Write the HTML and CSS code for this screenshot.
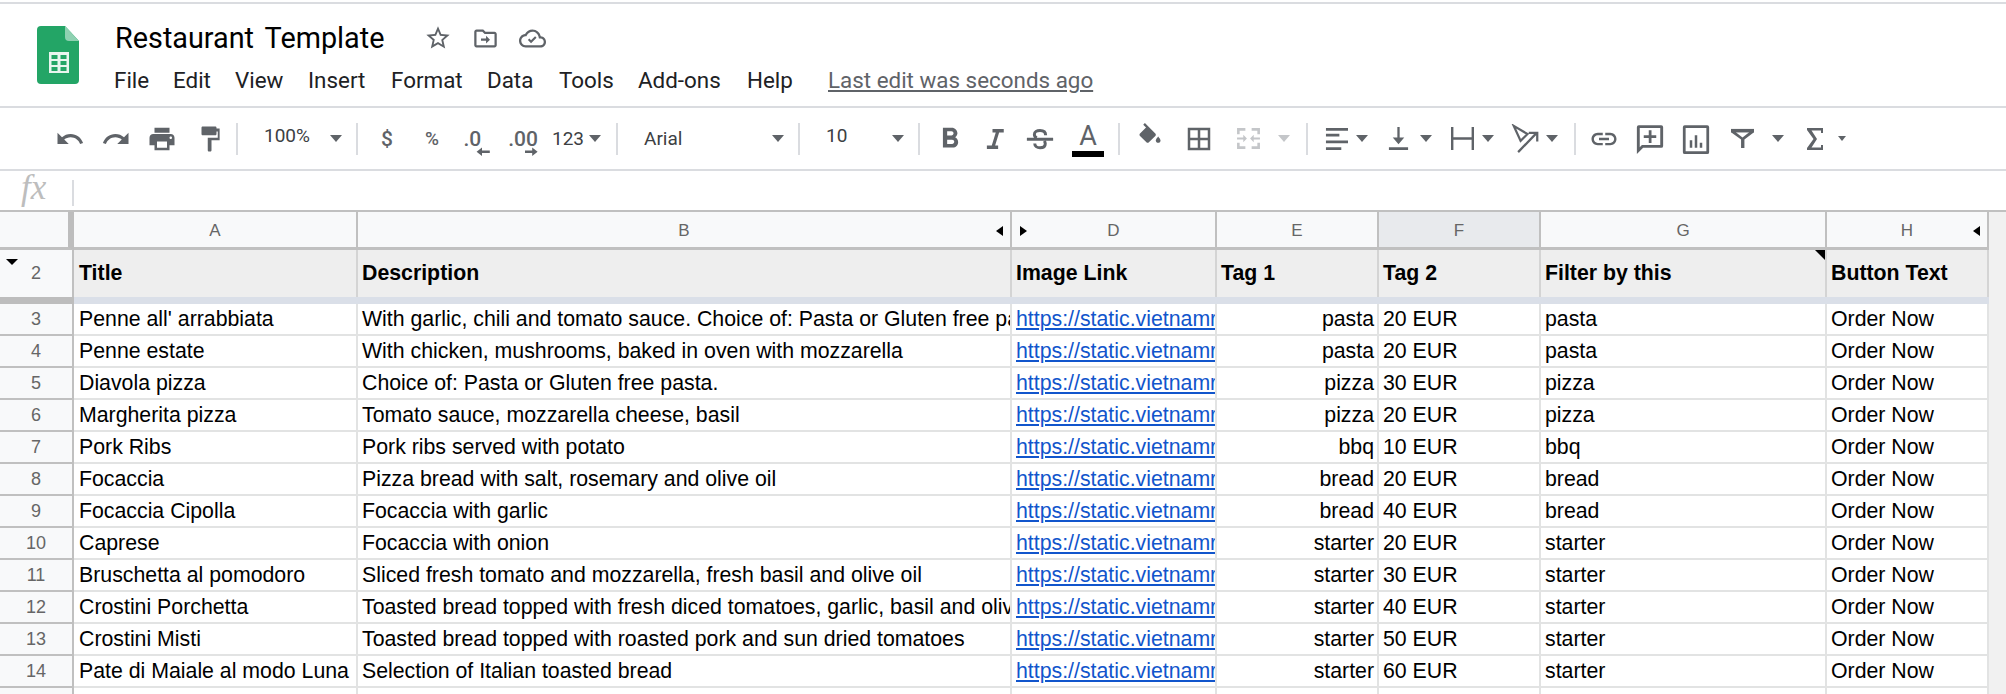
FILE: index.html
```html
<!DOCTYPE html>
<html lang="en">
<head>
<meta charset="utf-8">
<title>Restaurant Template</title>
<link rel="stylesheet" href="styles.css">
</head>
<body>
<header class="appbar">
  <svg class="logo" viewBox="0 0 42 58"><path fill="#23a566" d="M4 0H28L42 15V54a4 4 0 0 1-4 4H4a4 4 0 0 1-4-4V4a4 4 0 0 1 4-4z"/><path fill="#8ed1b1" d="M28 0L42 15H32a4 4 0 0 1-4-4z"/><path fill="#e8f5ee" d="M12 26H32V47H12zM14.500 29V33H20.500V29zM23.500 29V33H29.500V29zM14.500 35V39H20.500V35zM23.500 35V39H29.500V35zM14.500 41V45H20.500V41zM23.500 41V45H29.500V41z" fill-rule="evenodd"/></svg>
  <div class="titleblock">
    <div class="titlerow">
      <h1 class="doctitle">Restaurant Template</h1>
      <svg class="ticon star" viewBox="0 0 24 24"><path d="M22 9.240l-7.190-.62L12 2 9.190 8.630 2 9.240l5.460 4.730L5.820 21 12 17.270 18.180 21l-1.630-7.030L22 9.240zM12 15.400l-3.760 2.270 1-4.280-3.320-2.880 4.380-.38L12 6.100l1.710 4.040 4.380.38-3.320 2.880 1 4.280L12 15.400z"/></svg>
      <svg class="ticon folder" viewBox="0 0 24 24"><path d="M20 6h-8l-2-2H4c-1.100 0-2 .9-2 2v12c0 1.100.9 2 2 2h16c1.100 0 2-.9 2-2V8c0-1.100-.9-2-2-2zm0 12H4V6h5.200l2 2H20v10z"/><path d="M12.500 9.500v2.500H8v2h4.500v2.500l3.500-3.500z"/></svg>
      <svg class="ticon cloud" viewBox="0 0 24 24"><path d="M19.350 10.040C18.670 6.590 15.640 4 12 4 9.110 4 6.600 5.640 5.350 8.040 2.340 8.360 0 10.910 0 14c0 3.310 2.690 6 6 6h13c2.760 0 5-2.240 5-5 0-2.640-2.050-4.780-4.650-4.960zM19 18H6c-2.210 0-4-1.790-4-4 0-2.050 1.530-3.760 3.560-3.970l1.070-.11.5-.95C8.080 7.140 9.940 6 12 6c2.620 0 4.880 1.860 5.390 4.430l.3 1.500 1.530.11c1.560.1 2.780 1.410 2.780 2.960 0 1.650-1.350 3-3 3z"/><path d="M10.700 16.200l-2.800-2.800 1.300-1.300 1.500 1.500 3.600-3.600 1.300 1.300z"/></svg>
    </div>
    <nav class="menubar">
      <span class="m-file">File</span><span class="m-edit">Edit</span><span class="m-view">View</span><span class="m-insert">Insert</span><span class="m-format">Format</span><span class="m-data">Data</span><span class="m-tools">Tools</span><span class="m-addons">Add-ons</span><span class="m-help">Help</span>
      <a class="lastedit">Last edit was seconds ago</a>
    </nav>
  </div>
</header>

<div class="toolbar">
  <div class="tb w46"><svg class="ic" viewBox="0 0 24 24"><path d="M12.500 8c-2.650 0-5.050.99-6.900 2.600L2 7v9h9l-3.620-3.620c1.390-1.160 3.160-1.880 5.120-1.880 3.540 0 6.550 2.310 7.600 5.500l2.370-.78C21.080 11.030 17.150 8 12.500 8z"/></svg></div>
  <div class="tb w46"><svg class="ic" viewBox="0 0 24 24"><path d="M18.400 10.600C16.550 8.990 14.150 8 11.500 8c-4.650 0-8.580 3.030-9.960 7.220L3.900 16c1.050-3.190 4.050-5.500 7.600-5.500 1.950 0 3.730.72 5.120 1.880L13 16h9V7l-3.600 3.600z"/></svg></div>
  <div class="tb w46"><svg class="ic" viewBox="0 0 24 24"><path d="M19 8H5c-1.660 0-3 1.340-3 3v6h4v4h12v-4h4v-6c0-1.660-1.340-3-3-3zm-3 11H8v-5h8v5zm3-7c-.55 0-1-.45-1-1s.45-1 1-1 1 .45 1 1-.45 1-1 1zm-1-9H6v4h12V3z"/></svg></div>
  <div class="tb w48"><svg class="ic" viewBox="0 0 24 24"><path d="M18 3c0-.55-.45-1-1-1H7c-.55 0-1 .45-1 1v5c0 .55.45 1 1 1h10c.55 0 1-.45 1-1V6h1v5h-8v10c0 .55.45 1 1 1h1c.55 0 1-.45 1-1v-8h6.500V3.500H18z"/></svg></div>
  <i class="sep ml3"></i>
  <div class="sel w118"><span class="seltext up">100%</span><i class="arrow"></i></div>
  <i class="sep"></i>
  <div class="tb w58 tt">$</div>
  <div class="tb w32 tt small">%</div>
  <div class="tb w50"><svg class="ic dec" viewBox="0 0 30 30"><text x="7" y="20.500" class="dectext">.0</text><path d="M18 25.600l4.500-3.500v2.500h6.500v2h-6.500v2.500z"/></svg></div>
  <div class="tb w48"><svg class="ic dec" viewBox="0 0 30 30"><text x="3.500" y="20.500" class="dectext">.00</text><path d="M28 25.600l-4.500-3.500v2.500h-6v2h6v2.500z"/></svg></div>
  <div class="sel w70 pl6"><span class="tt123">123</span><i class="arrow a123"></i></div>
  <i class="sep"></i>
  <div class="sel w180"><span class="seltext">Arial</span><i class="arrow"></i></div>
  <i class="sep"></i>
  <div class="sel w118"><span class="seltext up">10</span><i class="arrow"></i></div>
  <i class="sep"></i>
  <div class="tb w60"><svg class="ic big" viewBox="0 0 24 24"><path d="M15.600 10.790c.97-.67 1.650-1.770 1.650-2.790 0-2.260-1.750-4-4-4H7v14h7.040c2.090 0 3.710-1.700 3.710-3.790 0-1.520-.86-2.820-2.150-3.420zM10 6.500h3c.83 0 1.500.67 1.500 1.500s-.67 1.500-1.500 1.500h-3v-3zm3.500 9H10v-3h3.500c.83 0 1.500.67 1.500 1.500s-.67 1.500-1.500 1.500z"/></svg></div>
  <div class="tb w30"><svg class="ic" viewBox="0 0 24 24"><path d="M10 4v2.800h2.600L9.400 17.200H5.500V20h9v-2.800h-2.400l3.200-10.400H19V4z"/></svg></div>
  <div class="tb w60"><svg class="ic" viewBox="0 0 24 24"><path fill="none" stroke="#5f6368" stroke-width="2.400" d="M16.500 9C16.500 6.200 14.500 5.200 12 5.200S7.500 6.400 7.500 8.300c0 1.400.9 2.300 2 2.700M7.800 15.500c0 2.200 1.900 3.500 4.200 3.500s4.200-1 4.200-3.200c0-.9-.3-1.600-.8-2.300"/><path d="M1.500 11h21v2.400h-21z"/></svg></div>
  <div class="tb w36 color"><span class="colorA">A</span><i class="colorbar"></i></div>
  <i class="sep ml12"></i>
  <div class="tb w60"><svg class="ic fill" viewBox="0 0 24 24"><path d="M16.560 8.940L7.620 0 6.210 1.410l2.380 2.380-5.150 5.150c-.59.59-.59 1.540 0 2.120l5.500 5.500c.29.29.68.44 1.060.44s.77-.15 1.060-.44l5.500-5.500c.59-.58.59-1.530 0-2.120z"/><path d="M19 11.500s-2 2.170-2 3.500c0 1.100.9 2 2 2s2-.9 2-2c0-1.330-2-3.500-2-3.500z"/></svg></div>
  <div class="tb w38"><svg class="ic" viewBox="0 0 24 24"><path d="M3 3v18h18V3H3zm8 16H5v-6h6v6zm0-8H5V5h6v6zm8 8h-6v-6h6v6zm0-8h-6V5h6v6z"/></svg></div>
  <div class="tb w60"><svg class="ic off" viewBox="0 0 24 24"><path d="M1 2h8v2.500H3.500V8H1zM15 2h8v6h-2.500V4.500H15zM1 16h2.500v3.500H9V22H1zM20.500 16H23v6h-8v-2.500h5.500zM1 11h6V8.500l3.500 3.500L7 15.500V13H1zM23 11h-6V8.500L13.500 12l3.500 3.500V13h6z"/></svg></div>
  <i class="arrow off"></i>
  <i class="sep ml16"></i>
  <div class="tb w40 ml8"><svg class="ic small24" viewBox="0 0 24 24"><path d="M1 1h23v3H1zM1 7h14v3H1zM1 14h23v3H1zM1 21h16v3H1z"/></svg></div>
  <i class="arrow"></i>
  <div class="tb w44 ml8"><svg class="ic small24" viewBox="0 0 24 24"><path d="M2 21h20v3H2zM10.800 0h2.400v11H18l-6 7-6-7h4.800z"/></svg></div>
  <i class="arrow"></i>
  <div class="tb w40 ml10"><svg class="ic small24" viewBox="0 0 24 24"><path d="M0 0h2.500v24H0zM21.500 0H24v24h-2.500zM2.500 10.800h19v2.400h-19z"/></svg></div>
  <i class="arrow"></i>
  <div class="tb w40 ml11"><svg class="ic" viewBox="0 0 24 24"><path fill="none" stroke="#5f6368" stroke-width="1.800" d="M3 1.500l11 6.500-5.500 5.500zM6.500 22.500L21 7.500M15 7h6.800v7"/></svg></div>
  <i class="arrow ml1"></i>
  <i class="sep ml16"></i>
  <div class="tb w56"><svg class="ic" viewBox="0 0 24 24"><path d="M3.900 12c0-1.710 1.390-3.100 3.100-3.100h4V7H7c-2.760 0-5 2.240-5 5s2.240 5 5 5h4v-1.900H7c-1.710 0-3.100-1.390-3.100-3.100zM8 13h8v-2H8v2zm9-6h-4v1.900h4c1.710 0 3.100 1.390 3.100 3.100s-1.390 3.100-3.100 3.100h-4V17h4c2.760 0 5-2.240 5-5s-2.240-5-5-5z"/></svg></div>
  <div class="tb w36"><svg class="ic" viewBox="0 0 24 24"><path d="M21 1H3a1.500 1.500 0 0 0-1.500 1.500V24l5-5H21a1.500 1.500 0 0 0 1.500-1.500v-15A1.500 1.500 0 0 0 21 1zm-.8 15.800H5.500l-1.700 1.700V3.200h16.400zM11 5h2.200v4H17v2.200h-3.800v4H11v-4H7V9h4z"/></svg></div>
  <div class="tb w56"><svg class="ic" viewBox="0 0 24 24"><path d="M3 1h18a1.500 1.500 0 0 1 1.500 1.500v20A1.500 1.500 0 0 1 21 24H3a1.500 1.500 0 0 1-1.500-1.500v-20A1.500 1.500 0 0 1 3 1zm.7 2.200v18.600h16.600V3.200zM7 13h2v6H7zM11 9h2v10h-2zM15 15h2v4h-2z"/></svg></div>
  <div class="tb w36"><svg class="ic small24" viewBox="0 0 24 24"><path d="M0 2h24v3.500L14 13v9h-3.500v-9L0 5.500zM5 5.500L12 11l7-5.500z" fill-rule="evenodd"/><path d="M0 2h24v3.500H0z"/></svg></div>
  <i class="arrow ml12"></i>
  <div class="tb w40 ml11"><svg class="ic sigma" viewBox="0 0 16 22"><path d="M0 0h16v5h-2V2.500H4.500L10 11l-5.500 8.500H14V17h2v5H0v-2l6.500-9L0 2z"/></svg></div>
  <i class="arrow mini ml3"></i>
</div>

<div class="formulabar">
  <span class="fx">fx</span>
  <i class="fxsep"></i>
</div>

<main class="sheet">
  <div class="row colhead">
    <div class="rh corner"></div>
    <div class="ch">A</div>
    <div class="ch">B<i class="hide-l"></i></div>
    <div class="ch"><i class="hide-r"></i>D</div>
    <div class="ch">E</div>
    <div class="ch sel-col">F</div>
    <div class="ch">G</div>
    <div class="ch">H<i class="hide-l"></i></div>
  </div>
  <div class="row frozen">
    <div class="rh"><i class="fold"></i>2</div>
    <div class="c">Title</div>
    <div class="c">Description</div>
    <div class="c">Image Link</div>
    <div class="c">Tag 1</div>
    <div class="c">Tag 2</div>
    <div class="c note">Filter by this</div>
    <div class="c">Button Text</div>
  </div>
  <div class="row band"><div class="band-rh"></div><div class="band-main"></div></div>

  <div class="row"><div class="rh">3</div><div class="c">Penne all' arrabbiata</div><div class="c">With garlic, chili and tomato sauce. Choice of: Pasta or Gluten free pasta.</div><div class="c"><a class="lnk">https://static.vietnamres</a></div><div class="c num">pasta</div><div class="c">20 EUR</div><div class="c">pasta</div><div class="c">Order Now</div></div>
  <div class="row"><div class="rh">4</div><div class="c">Penne estate</div><div class="c">With chicken, mushrooms, baked in oven with mozzarella</div><div class="c"><a class="lnk">https://static.vietnamres</a></div><div class="c num">pasta</div><div class="c">20 EUR</div><div class="c">pasta</div><div class="c">Order Now</div></div>
  <div class="row"><div class="rh">5</div><div class="c">Diavola pizza</div><div class="c">Choice of: Pasta or Gluten free pasta.</div><div class="c"><a class="lnk">https://static.vietnamres</a></div><div class="c num">pizza</div><div class="c">30 EUR</div><div class="c">pizza</div><div class="c">Order Now</div></div>
  <div class="row"><div class="rh">6</div><div class="c">Margherita pizza</div><div class="c">Tomato sauce, mozzarella cheese, basil</div><div class="c"><a class="lnk">https://static.vietnamres</a></div><div class="c num">pizza</div><div class="c">20 EUR</div><div class="c">pizza</div><div class="c">Order Now</div></div>
  <div class="row"><div class="rh">7</div><div class="c">Pork Ribs</div><div class="c">Pork ribs served with potato</div><div class="c"><a class="lnk">https://static.vietnamres</a></div><div class="c num">bbq</div><div class="c">10 EUR</div><div class="c">bbq</div><div class="c">Order Now</div></div>
  <div class="row"><div class="rh">8</div><div class="c">Focaccia</div><div class="c">Pizza bread with salt, rosemary and olive oil</div><div class="c"><a class="lnk">https://static.vietnamres</a></div><div class="c num">bread</div><div class="c">20 EUR</div><div class="c">bread</div><div class="c">Order Now</div></div>
  <div class="row"><div class="rh">9</div><div class="c">Focaccia Cipolla</div><div class="c">Focaccia with garlic</div><div class="c"><a class="lnk">https://static.vietnamres</a></div><div class="c num">bread</div><div class="c">40 EUR</div><div class="c">bread</div><div class="c">Order Now</div></div>
  <div class="row"><div class="rh">10</div><div class="c">Caprese</div><div class="c">Focaccia with onion</div><div class="c"><a class="lnk">https://static.vietnamres</a></div><div class="c num">starter</div><div class="c">20 EUR</div><div class="c">starter</div><div class="c">Order Now</div></div>
  <div class="row"><div class="rh">11</div><div class="c">Bruschetta al pomodoro</div><div class="c">Sliced fresh tomato and mozzarella, fresh basil and olive oil</div><div class="c"><a class="lnk">https://static.vietnamres</a></div><div class="c num">starter</div><div class="c">30 EUR</div><div class="c">starter</div><div class="c">Order Now</div></div>
  <div class="row"><div class="rh">12</div><div class="c">Crostini Porchetta</div><div class="c">Toasted bread topped with fresh diced tomatoes, garlic, basil and olive oil</div><div class="c"><a class="lnk">https://static.vietnamres</a></div><div class="c num">starter</div><div class="c">40 EUR</div><div class="c">starter</div><div class="c">Order Now</div></div>
  <div class="row"><div class="rh">13</div><div class="c">Crostini Misti</div><div class="c">Toasted bread topped with roasted pork and sun dried tomatoes</div><div class="c"><a class="lnk">https://static.vietnamres</a></div><div class="c num">starter</div><div class="c">50 EUR</div><div class="c">starter</div><div class="c">Order Now</div></div>
  <div class="row"><div class="rh">14</div><div class="c">Pate di Maiale al modo Luna</div><div class="c">Selection of Italian toasted bread</div><div class="c"><a class="lnk">https://static.vietnamres</a></div><div class="c num">starter</div><div class="c">60 EUR</div><div class="c">starter</div><div class="c">Order Now</div></div>
  <div class="row"><div class="rh"></div><div class="c"></div><div class="c"></div><div class="c"></div><div class="c"></div><div class="c"></div><div class="c"></div><div class="c"></div></div>
</main>
</body>
</html>
```
FILE: styles.css
```css
* { box-sizing: border-box; }
html, body { margin: 0; padding: 0; }
body {
  width: 2006px;
  height: 694px;
  overflow: hidden;
  background: #fff;
  font-family: Roboto, "Liberation Sans", sans-serif;
}
i { display: block; font-style: normal; }

/* App bar */
.appbar {
  height: 106px;
  margin-top: 2px;
  border-top: 2px solid #dadce0;
  border-bottom: 2px solid #dadce0;
  display: flex;
  padding-left: 37px;
}
.logo { width: 42px; height: 58px; margin-top: 22px; flex: none; }
.titleblock { margin-left: 35px; }
.titlerow { display: flex; align-items: center; height: 40px; margin-top: 14px; }
.doctitle {
  margin: 0 0 0 1px;
  font: 400 28.800px Roboto, sans-serif;
  color: #000;
  word-spacing: 4px;
  width: 308px;
}
.ticon { fill: #5f6368; flex: none; width: 28px; height: 28px; }
.star { margin-left: 1px; }
.folder { margin-left: 20px; width: 27px; height: 27px; }
.cloud { margin-left: 20px; width: 27px; height: 27px; }
.menubar { display: flex; margin-top: 7px; font-size: 22.400px; color: #202124; line-height: 30px; }
.m-file { width: 59px; }
.m-edit { width: 62px; }
.m-view { width: 73px; }
.m-insert { width: 83px; }
.m-format { width: 96px; }
.m-data { width: 72px; }
.m-tools { width: 79px; }
.m-addons { width: 109px; }
.m-help { width: 81px; }
.lastedit { color: #5f6368; text-decoration: underline; }

/* Toolbar */
.toolbar {
  height: 63px;
  border-bottom: 2px solid #dadce0;
  display: flex;
  align-items: center;
  padding-left: 47px;
  color: #5f6368;
}
.tb { flex: none; display: flex; align-items: center; justify-content: center; height: 34px; }
.ic { width: 30px; height: 30px; fill: #5f6368; display: block; }
.ic.big { width: 34px; height: 34px; }
.ic.small24 { width: 23px; height: 23px; }
.ic.sigma { width: 16px; height: 22px; }
.ic.off { fill: #c4c6c9; width: 25px; height: 25px; }
.ic.fill { width: 28px; height: 28px; margin-top: -4px; }
.sep { flex: none; width: 2px; height: 32px; background: #dadce0; }
.arrow {
  flex: none;
  width: 0;
  height: 0;
  border-left: 6px solid transparent;
  border-right: 6px solid transparent;
  border-top: 7px solid #5f6368;
}
.arrow.off { border-top-color: #c4c6c9; }
.arrow.mini { border-left-width: 4px; border-right-width: 4px; border-top-width: 5px; }
.sel {
  flex: none;
  display: flex;
  align-items: center;
  justify-content: space-between;
  padding: 0 14px 0 26px;
  height: 34px;
  font-size: 19px;
  color: #3c4043;
}
.seltext.up { position: relative; top: -3px; }
.w30 { width: 30px; } .w32 { width: 32px; } .w36 { width: 36px; } .w38 { width: 38px; }
.w40 { width: 40px; } .w44 { width: 44px; } .w46 { width: 46px; } .w48 { width: 48px; }
.w50 { width: 50px; } .w56 { width: 56px; } .w58 { width: 58px; } .w60 { width: 60px; }
.w70 { width: 70px; } .w118 { width: 118px; } .w180 { width: 180px; }
.ml1 { margin-left: 1px; } .ml3 { margin-left: 3px; } .ml8 { margin-left: 8px; }
.ml10 { margin-left: 10px; } .ml11 { margin-left: 11px; } .ml12 { margin-left: 12px; } .ml16 { margin-left: 16px; }
.pl6 { padding: 0 15px 0 6px; }
.tt { font: 500 21px Roboto, sans-serif; color: #5f6368; }
.tt.small { font-size: 19px; }
.tt123 { font-size: 19px; color: #3c4043; }
.dectext { font: 500 17.500px Roboto, sans-serif; fill: #5f6368; }
.ic.dec { width: 36px; height: 36px; }
.color { flex-direction: column; height: 40px; margin-top: 2px; }
.colorA { font: 400 27px/26px Roboto, sans-serif; color: #5f6368; }
.colorbar { width: 32px; height: 6px; background: #000; margin-top: 2px; }

/* Formula bar */
.formulabar { height: 40px; display: flex; align-items: center; }
.fx { font: italic 400 35px/38px "Liberation Serif", serif; color: #bdbdbd; margin: -6px 0 0 21px; width: 51px; }
.fxsep { width: 2px; height: 26px; background: #dadce0; margin-top: 4px; }

/* Sheet */
.sheet { background: #f1f1f1; height: 484px; border-top: 2px solid #c0c0c0; margin-top: -1px; }
.row {
  display: grid;
  grid-template-columns: 74px 284px 654px 205px 162px 162px 286px 162px;
  height: 32px;
  font: 400 21.300px/30px "Liberation Sans", Arial, sans-serif;
  color: #000;
}
.rh {
  position: relative;
  background: #f8f9fa;
  border-right: 2px solid #c0c0c0;
  border-bottom: 2px solid #c0c0c0;
  font-size: 18px;
  text-align: center;
  color: #666;
}
.c {
  background: #fff;
  border-right: 2px solid #e2e3e3;
  border-bottom: 2px solid #e2e3e3;
  padding: 0 3px 0 4px;
  white-space: nowrap;
  overflow: hidden;
}
.rh + .c { padding-left: 5px; }
.num { text-align: right; }
.lnk { color: #1155cc; text-decoration: underline; }

.colhead { height: 38px; }
.corner { border-right: 6px solid #bdbdbd; border-bottom-width: 3px; }
.ch {
  position: relative;
  background: #f8f9fa;
  border-right: 2px solid #c0c0c0;
  border-bottom: 3px solid #c0c0c0;
  padding-top: 2px;
  font: 400 17px/33px "Liberation Sans", Arial, sans-serif;
  color: #666;
  text-align: center;
}
.sel-col { background: #e8eaed; }
.hide-l, .hide-r {
  position: absolute;
  top: 14px;
  width: 0;
  height: 0;
  border-top: 5px solid transparent;
  border-bottom: 5px solid transparent;
}
.hide-l { right: 7px; border-right: 7px solid #000; }
.hide-r { left: 8px; border-left: 7px solid #000; }

.frozen { height: 47px; }
.frozen .rh { line-height: 47px; border-bottom: 0; }
.frozen .c {
  position: relative;
  background: #eee;
  border-bottom: 0;
  border-right-color: #d4d4d4;
  font-weight: 700;
  line-height: 46px;
}
.fold {
  position: absolute;
  left: 6px;
  top: 9px;
  width: 0;
  height: 0;
  border-left: 6px solid transparent;
  border-right: 6px solid transparent;
  border-top: 6px solid #000;
}
.note::after {
  content: "";
  position: absolute;
  top: 0;
  right: 0;
  border-top: 10px solid #000;
  border-left: 10px solid transparent;
}
.band { height: 7px; grid-template-columns: 74px 1915px; }
.band-rh { background: #bdbdbd; }
.band-main { background: #dadfe8; }
```
